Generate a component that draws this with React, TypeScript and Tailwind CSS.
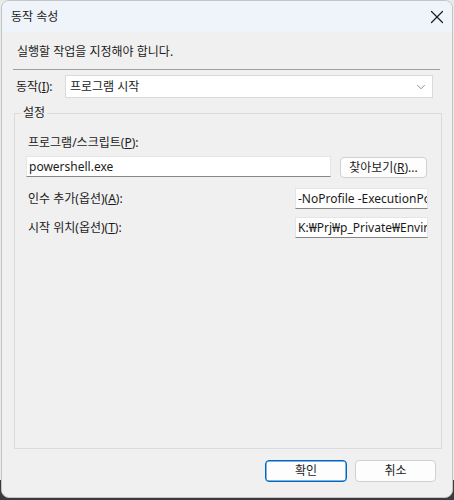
import { X, ChevronDown } from 'lucide-react';

const font = "font-['Segoe_UI','Noto_Sans','Noto_Sans_CJK_KR',sans-serif]";

function Field({ value, className }: { value: string; className: string }) {
  return (
    <div
      className={`h-[21px] overflow-hidden whitespace-nowrap border border-[#e5e5e5] border-b-[#868686] bg-white pl-[2px] text-[12px] leading-[19px] text-[#1b1b1b] ${className}`}
    >
      {value}
    </div>
  );
}

export default function App() {
  return (
    <div
      className={`h-[500px] w-[454px] bg-[linear-gradient(to_bottom,#e9eaec_0,#e9eaec_480px,#3b3b3b_480px)] text-[12px] text-[#1b1b1b] ${font}`}
    >
      <div className="ml-[1px] flex h-[498px] w-[452px] flex-col overflow-hidden rounded-[8px] border border-[#c4c4c4] bg-[#f0f0f0]">
        {/* title bar */}
        <div className="flex h-[31px] shrink-0 items-center justify-between bg-[#eef4f9] pl-[9px] pr-[4px]">
          <span className="mt-[1px] leading-[16px]">동작 속성</span>
          <X size={22} strokeWidth={1.3} className="text-[#1b1b1b]" />
        </div>

        <div className="flex flex-1 flex-col">
          <p className="ml-[15px] mt-[12px] leading-[16px]">실행할 작업을 지정해야 합니다.</p>
          <div className="ml-[11px] mr-[12px] mt-[9px] h-[1px] bg-[#a0a0a0]" />

          <div className="mt-[5px] flex items-center pl-[14px]">
            <span className="w-[49px] leading-[16px]">
              동작(<u>I</u>):
            </span>
            <div className="flex h-[23px] w-[368px] items-center justify-between border border-[#dadada] bg-white pl-[4px] pr-[4px]">
              <span className="leading-[16px]">프로그램 시작</span>
              <ChevronDown size={14} strokeWidth={1.2} className="text-[#5f5f5f]" />
            </div>
          </div>

          <fieldset className="ml-[12px] mt-[7px] flex w-[428px] flex-1 flex-col border border-[#dcdcdc]">
            <legend className="ml-[6px] px-[2px] leading-[16px]">설정</legend>
            <div className="flex flex-col pl-[11px] pr-[13px]">
              <span className="mt-[14px] pl-[2px] leading-[16px]">
                프로그램/스크립트(<u>P</u>):
              </span>
              <div className="mt-[5px] flex items-start gap-[9px]">
                <Field value="powershell.exe" className="w-[305px]" />
                <button className="mt-[1px] flex h-[21px] w-[87px] items-center justify-center rounded-[4px] border border-[#d0d0d0] bg-[#fdfdfd] text-[12px] leading-[16px]">
                  찾아보기(<u>R</u>)...
                </button>
              </div>
              <div className="mt-[10px] flex items-center justify-between">
                <span className="pl-[2px] leading-[16px]">
                  인수 추가(옵션)(<u>A</u>):
                </span>
                <Field value="-NoProfile -ExecutionPolicy Bypass" className="w-[133px]" />
              </div>
              <div className="mt-[8px] flex items-center justify-between">
                <span className="pl-[2px] leading-[16px]">
                  시작 위치(옵션)(<u>T</u>):
                </span>
                <Field value="K:₩Prj₩p_Private₩Environment" className="w-[133px]" />
              </div>
            </div>
          </fieldset>

          <div className="mb-[15px] mt-[11px] flex justify-end gap-[8px] pr-[16px]">
            <button className="flex h-[22px] w-[82px] items-center justify-center rounded-[4px] border border-[#0067c0] bg-[#fdfdfd] text-[12px] leading-[16px] shadow-[inset_0_0_0_0.5px_#0067c0]">
              확인
            </button>
            <button className="flex h-[22px] w-[81px] items-center justify-center rounded-[4px] border border-[#d0d0d0] bg-[#fdfdfd] text-[12px] leading-[16px]">
              취소
            </button>
          </div>
        </div>
      </div>
    </div>
  );
}
